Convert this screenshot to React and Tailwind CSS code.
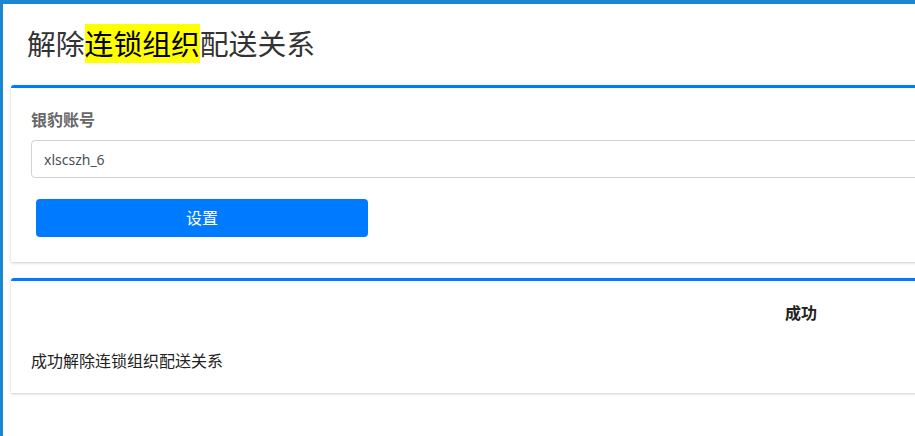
export default function App() {
  const cjk = { fontFamily: '"Noto Sans", "Noto Sans CJK SC", sans-serif' };
  return (
    <div className="h-[436px] w-[915px] overflow-hidden bg-white border-l-[3px] border-t-4 border-[#1b86d1]" style={cjk}>
      <div className="w-[1400px]">
        <h1 className="pl-[24px] pt-[22px] text-[28.8px] leading-[36px] font-normal text-[#333333]">
          解除<span className="bg-[#ffff00] text-black">连锁组织</span>配送关系
        </h1>
        <div className="ml-[8px] mt-[23px] rounded-t-[3px] border-t-[3px] border-[#007bff] bg-white shadow-[0_1px_3px_rgba(0,0,0,0.2)] px-[20px] pt-[20px] pb-[25px]">
          <div className="text-[16px] leading-[24px] font-semibold text-[#666666] mb-[8px]">银豹账号</div>
          <div className="h-[38px] rounded-[4px] border border-[#ced4da] flex items-center pl-[12px] text-[14px] text-[#495057]">
            xlscszh_6
          </div>
          <button className="mt-[21px] ml-[5px] h-[38px] w-[332px] rounded-[4px] bg-[#007bff] text-white text-[16px] flex items-center justify-center">
            设置
          </button>
        </div>
        <div className="ml-[8px] mt-[16px] rounded-t-[3px] border-t-[3px] border-[#007bff] bg-white shadow-[0_1px_3px_rgba(0,0,0,0.2)] px-[20px] pt-[20px] pb-[20px]">
          <div className="pl-[754px] text-[16px] leading-[24px] font-bold text-[#222222]">成功</div>
          <div className="mt-[24px] text-[16px] leading-[24px] text-[#222222]">成功解除连锁组织配送关系</div>
        </div>
      </div>
    </div>
  );
}
